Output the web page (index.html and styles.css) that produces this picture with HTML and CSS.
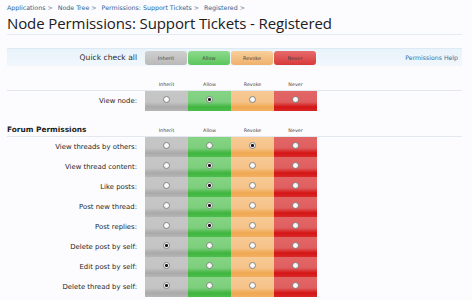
FILE: index.html
```html
<!DOCTYPE html>
<html>
<head>
<meta charset="utf-8">
<link rel="stylesheet" href="styles.css">
</head>
<body>
<div class="page">
  <nav class="crumbs">
    <a>Applications</a><span class="sep">&gt;</span>
    <a>Node Tree</a><span class="sep">&gt;</span>
    <a>Permissions: Support Tickets</a><span class="sep">&gt;</span>
    <a>Registered</a><span class="sep">&gt;</span>
  </nav>
  <h1 class="title">Node Permissions: Support Tickets - Registered</h1>

  <div class="quick">
    <div class="qlabel">Quick check all</div>
    <div class="qbtns">
      <span class="qbtn inherit">Inherit</span>
      <span class="qbtn allow">Allow</span>
      <span class="qbtn revoke">Revoke</span>
      <span class="qbtn never">Never</span>
    </div>
    <a class="help">Permissions Help</a>
  </div>

  <div class="head">
    <div class="hlabel"></div>
    <div class="hcol">Inherit</div><div class="hcol">Allow</div><div class="hcol">Revoke</div><div class="hcol">Never</div>
  </div>
  <div class="row">
    <div class="label">View node:</div>
    <div class="cell inherit"><i class="radio"></i></div>
    <div class="cell allow"><i class="radio on"></i></div>
    <div class="cell revoke"><i class="radio"></i></div>
    <div class="cell never"><i class="radio"></i></div>
  </div>

  <div class="head section">
    <div class="hlabel">Forum Permissions</div>
    <div class="hcol">Inherit</div><div class="hcol">Allow</div><div class="hcol">Revoke</div><div class="hcol">Never</div>
  </div>
  <div class="row">
    <div class="label">View threads by others:</div>
    <div class="cell inherit"><i class="radio"></i></div>
    <div class="cell allow"><i class="radio"></i></div>
    <div class="cell revoke"><i class="radio on"></i></div>
    <div class="cell never"><i class="radio"></i></div>
  </div>
  <div class="row">
    <div class="label">View thread content:</div>
    <div class="cell inherit"><i class="radio"></i></div>
    <div class="cell allow"><i class="radio on"></i></div>
    <div class="cell revoke"><i class="radio"></i></div>
    <div class="cell never"><i class="radio"></i></div>
  </div>
  <div class="row">
    <div class="label">Like posts:</div>
    <div class="cell inherit"><i class="radio"></i></div>
    <div class="cell allow"><i class="radio on"></i></div>
    <div class="cell revoke"><i class="radio"></i></div>
    <div class="cell never"><i class="radio"></i></div>
  </div>
  <div class="row">
    <div class="label">Post new thread:</div>
    <div class="cell inherit"><i class="radio"></i></div>
    <div class="cell allow"><i class="radio on"></i></div>
    <div class="cell revoke"><i class="radio"></i></div>
    <div class="cell never"><i class="radio"></i></div>
  </div>
  <div class="row">
    <div class="label">Post replies:</div>
    <div class="cell inherit"><i class="radio"></i></div>
    <div class="cell allow"><i class="radio on"></i></div>
    <div class="cell revoke"><i class="radio"></i></div>
    <div class="cell never"><i class="radio"></i></div>
  </div>
  <div class="row">
    <div class="label">Delete post by self:</div>
    <div class="cell inherit"><i class="radio on"></i></div>
    <div class="cell allow"><i class="radio"></i></div>
    <div class="cell revoke"><i class="radio"></i></div>
    <div class="cell never"><i class="radio"></i></div>
  </div>
  <div class="row">
    <div class="label">Edit post by self:</div>
    <div class="cell inherit"><i class="radio on"></i></div>
    <div class="cell allow"><i class="radio"></i></div>
    <div class="cell revoke"><i class="radio"></i></div>
    <div class="cell never"><i class="radio"></i></div>
  </div>
  <div class="row">
    <div class="label">Delete thread by self:</div>
    <div class="cell inherit"><i class="radio on"></i></div>
    <div class="cell allow"><i class="radio"></i></div>
    <div class="cell revoke"><i class="radio"></i></div>
    <div class="cell never"><i class="radio"></i></div>
  </div>
</div>
</body>
</html>
```
FILE: styles.css
```css
html, body { margin: 0; padding: 0; background: #fcfcfe; }
body { font-family: "DejaVu Sans", Verdana, sans-serif; color: #222; overflow: hidden; }
.page { padding: 0 10px 0 7px; }

.crumbs { display: flex; align-items: center; gap: 2px; height: 12px; padding-top: 1px; font-size: 6.3px; color: #2b6294; }
.crumbs .sep { margin-right: 3px; color: #6a8aa8; }

.title { margin: 0; font-family: "Open Sans", sans-serif; font-weight: 400; font-size: 15px; line-height: 20px; height: 21px; color: #202020; border-bottom: 1px solid #e4ecf2; letter-spacing: -0.1px; }

.quick { display: flex; align-items: center; margin-top: 13px; height: 17px; background: linear-gradient(#e9f3fb, #f1f7fc); border-top: 1px solid #dde9f3; }
.qlabel { width: 130px; text-align: right; padding-right: 8px; font-size: 7.6px; color: #2a2a2a; }
.qbtns { display: flex; gap: 1px; }
.qbtn { width: 42px; height: 14px; border-radius: 3px; font-size: 5px; display: flex; align-items: center; justify-content: center; color: #444; }
.qbtn.inherit { background: linear-gradient(#cfcfcf, #b9b9b9); }
.qbtn.allow { background: linear-gradient(#8ddb8d, #5cc65c); }
.qbtn.revoke { background: linear-gradient(#f8cf9c, #f0b06a); }
.qbtn.never { background: linear-gradient(#e66b6b, #d83a3a); }
.help { margin-left: auto; padding-right: 4px; font-size: 6.2px; color: #3a6e9b; }

.head { display: grid; grid-template-columns: 138px 43px 43px 43px 43px 1fr; align-items: end; height: 12px; margin-top: 12px; border-bottom: 1px solid #e2e8ee; }
.head.section { margin-top: 11px; height: 14px; }
.hlabel { font-weight: bold; font-size: 7.4px; color: #222; padding-bottom: 2px; }
.hcol { text-align: center; font-size: 4.8px; color: #444; padding-bottom: 3px; }

.row { display: grid; grid-template-columns: 138px 43px 43px 43px 43px; height: 20px; }
.label { text-align: right; padding-right: 8px; font-size: 6.9px; color: #262626; display: flex; align-items: center; justify-content: flex-end; }
.cell { display: flex; align-items: center; justify-content: center; padding-bottom: 3px; }
.cell.inherit { background: linear-gradient(#c6c6c6 0%, #c4c4c4 55%, #a9a9a9 80%, #b6b6b6 100%); }
.cell.allow { background: linear-gradient(#85d485 0%, #7ccf7c 55%, #3fb53f 80%, #4cbd4c 100%); }
.cell.revoke { background: linear-gradient(#f7c994 0%, #f5c38a 55%, #f0a852 80%, #f2b060 100%); }
.cell.never { background: linear-gradient(#e26666 0%, #df5f5f 55%, #d41414 80%, #d82828 100%); }

.radio { width: 7px; height: 7px; border-radius: 50%; background: radial-gradient(circle at 50% 40%, #fff 0%, #f6f6f6 60%, #d8d8d8 100%); border: 0.5px solid #8a8a8a; box-sizing: border-box; display: flex; align-items: center; justify-content: center; }
.radio.on::after { content: ""; width: 2.6px; height: 2.6px; border-radius: 50%; background: #111; }
```
